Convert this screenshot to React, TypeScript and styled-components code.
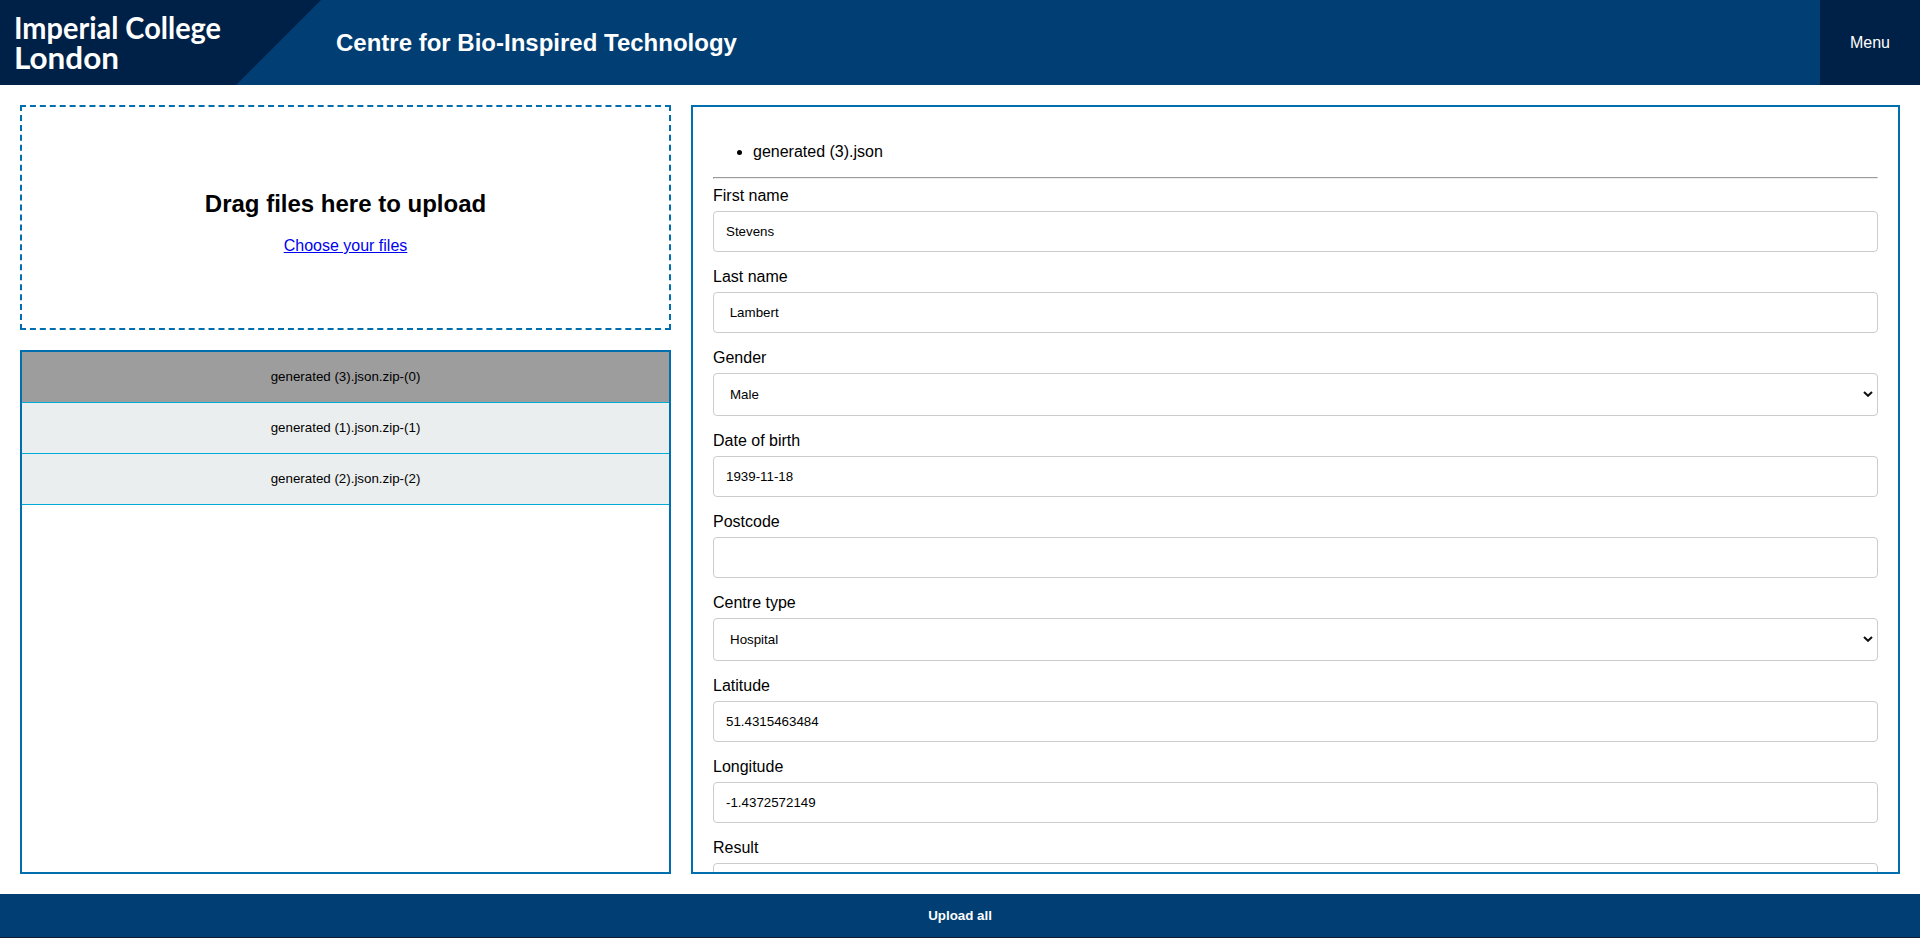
import React from 'react';
import styled, { createGlobalStyle, css } from 'styled-components';

const colors = {
  navy: '#002147',
  imperial: '#003e74',
  border: '#006eaf',
  row: '#ebeeee',
  rowSelected: '#9d9d9d',
  rowLine: '#00acd7',
};

const GlobalStyle = createGlobalStyle`
  * {
    box-sizing: border-box;
  }
  body {
    margin: 0;
    overflow: hidden;
    background: #ffffff;
    color: #000000;
    font-family: 'Liberation Sans', Arial, sans-serif;
    font-size: 16px;
    line-height: 18px;
  }
`;

const Page = styled.div`
  display: flex;
  flex-direction: column;
  height: 938px;
`;

const Header = styled.header`
  display: flex;
  flex: none;
  align-items: center;
  height: 85px;
  background: ${colors.imperial};
  color: #ffffff;
`;

const Brand = styled.div`
  width: 321px;
  height: 85px;
  background: ${colors.navy};
  clip-path: polygon(0 0, 321px 0, 236px 85px, 0 85px);
`;

const Title = styled.h1`
  flex: 1;
  margin: 0 0 0 15px;
  font-size: 24px;
  line-height: 28px;
  font-weight: bold;
`;

const MenuButton = styled.button`
  width: 100px;
  height: 85px;
  padding: 0;
  border: 0;
  background: ${colors.navy};
  color: #ffffff;
  font: 16px/18px 'Liberation Sans', Arial, sans-serif;
`;

const Main = styled.main`
  display: grid;
  flex: 1;
  grid-template-columns: 651px 1fr;
  grid-template-rows: 225px 1fr;
  gap: 20px;
  min-height: 0;
  padding: 20px;
`;

const DropZone = styled.section`
  padding-top: 83px;
  border: 2px dashed ${colors.border};
  text-align: center;
`;

const DropTitle = styled.h2`
  margin: 0 0 20px;
  font-size: 24px;
  line-height: 27px;
`;

const ChooseLink = styled.a`
  color: #0000ee;
  text-decoration: underline;
`;

const FileList = styled.section`
  grid-row: 2;
  border: 2px solid ${colors.border};
`;

const FileRow = styled.button<{ $selected?: boolean }>`
  display: block;
  width: 100%;
  height: 51px;
  padding: 0 0 2px;
  border: 0;
  border-bottom: 1px solid ${colors.rowLine};
  background: ${({ $selected }) => ($selected ? colors.rowSelected : colors.row)};
  color: #000000;
  font: 13.3333px/15px 'Liberation Sans', Arial, sans-serif;
  text-align: center;
`;

const DetailPanel = styled.section`
  grid-column: 2;
  grid-row: 1 / 3;
  min-height: 0;
  padding: 20px;
  border: 2px solid ${colors.border};
  overflow: hidden;
`;

const SourceList = styled.ul`
  margin: 16px 0;
  padding-left: 40px;
`;

const Divider = styled.hr`
  height: 2px;
  margin: 0 0 8px;
  border: 1px solid;
  border-color: #9a9a9a #eeeeee #eeeeee #9a9a9a;
`;

const Label = styled.label`
  display: block;
`;

const control = css`
  display: block;
  width: 100%;
  margin: 6px 0 16px;
  padding: 12px;
  border: 1px solid #cccccc;
  border-radius: 4px;
  background-color: #ffffff;
  color: #000000;
  font: 13.3333px 'Liberation Sans', Arial, sans-serif;
`;

const TextInput = styled.input`
  ${control}
  height: 41px;
`;

const chevron =
  "data:image/svg+xml,%3Csvg xmlns='http://www.w3.org/2000/svg' width='10' height='6' viewBox='0 0 10 6'%3E%3Cpath d='M1 1l4 3.8L9 1' fill='none' stroke='%23101010' stroke-width='2'/%3E%3C/svg%3E";

const Select = styled.select`
  ${control}
  height: 43px;
  padding-left: 16px;
  appearance: none;
  background-image: url("${chevron}");
  background-repeat: no-repeat;
  background-position: right 4px top 17px;
`;

const Footer = styled.button`
  flex: none;
  height: 44px;
  padding: 0;
  border: 0;
  border-bottom: 1px solid #101f30;
  background: ${colors.imperial};
  color: #ffffff;
  font: bold 13.3333px/15px 'Liberation Sans', Arial, sans-serif;
`;

const files = [
  'generated (3).json.zip-(0)',
  'generated (1).json.zip-(1)',
  'generated (2).json.zip-(2)',
];

type FieldData = { label: string; value: string; kind?: 'select' };

const fields: FieldData[] = [
  { label: 'First name', value: 'Stevens' },
  { label: 'Last name', value: ' Lambert' },
  { label: 'Gender', value: 'Male', kind: 'select' },
  { label: 'Date of birth', value: '1939-11-18' },
  { label: 'Postcode', value: '' },
  { label: 'Centre type', value: 'Hospital', kind: 'select' },
  { label: 'Latitude', value: '51.4315463484' },
  { label: 'Longitude', value: '-1.4372572149' },
  { label: 'Result', value: '' },
];

const Field = ({ label, value, kind }: FieldData) => (
  <Label>
    {label}
    {kind === 'select' ? (
      <Select defaultValue={value}>
        <option>{value}</option>
      </Select>
    ) : (
      <TextInput type="text" defaultValue={value} />
    )}
  </Label>
);

const Logo = () => (
  <svg width="236" height="85" viewBox="0 0 236 85" role="img" aria-label="Imperial College London">
    <g fill="#ffffff" fontFamily="Lato, 'Open Sans', sans-serif" fontSize="30" fontWeight="700">
      <text x="14" y="38.5" textLength="207" lengthAdjust="spacingAndGlyphs">
        Imperial College
      </text>
      <text x="14" y="69" textLength="105" lengthAdjust="spacingAndGlyphs">
        London
      </text>
    </g>
  </svg>
);

export default function App() {
  return (
    <>
      <GlobalStyle />
      <Page>
        <Header>
          <Brand>
            <Logo />
          </Brand>
          <Title>Centre for Bio-Inspired Technology</Title>
          <MenuButton>Menu</MenuButton>
        </Header>
        <Main>
          <DropZone>
            <DropTitle>Drag files here to upload</DropTitle>
            <ChooseLink href="#">Choose your files</ChooseLink>
          </DropZone>
          <FileList>
            {files.map((name, i) => (
              <FileRow key={name} $selected={i === 0}>
                {name}
              </FileRow>
            ))}
          </FileList>
          <DetailPanel>
            <SourceList>
              <li>generated (3).json</li>
            </SourceList>
            <Divider />
            {fields.map((f) => (
              <Field key={f.label} {...f} />
            ))}
          </DetailPanel>
        </Main>
        <Footer>Upload all</Footer>
      </Page>
    </>
  );
}
